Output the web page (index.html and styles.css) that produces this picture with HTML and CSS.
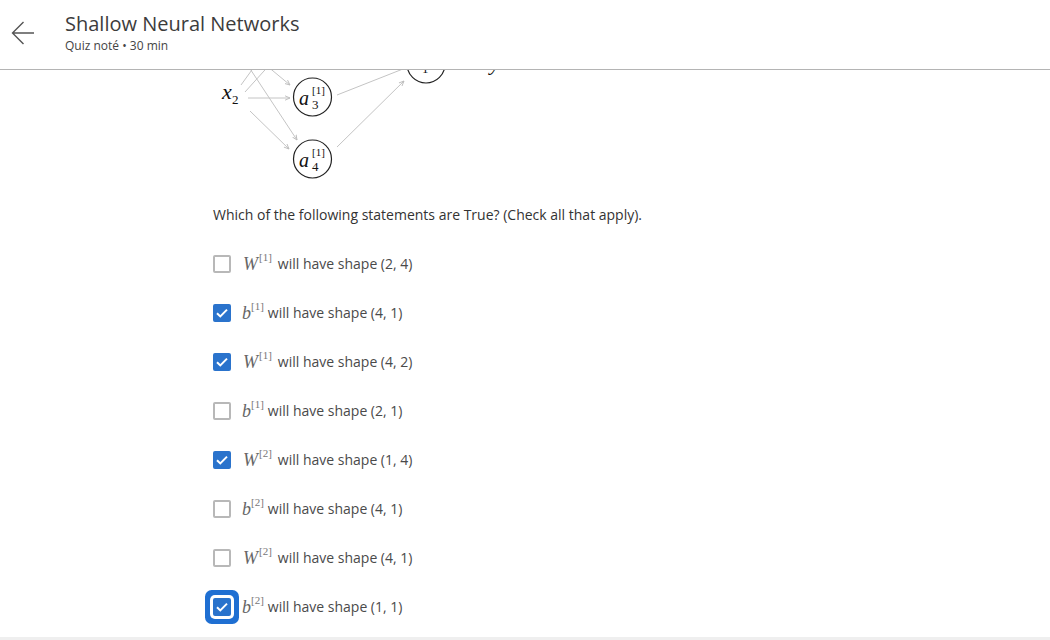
FILE: index.html
```html
<!DOCTYPE html>
<html>
<head>
<meta charset="utf-8">
<link rel="stylesheet" href="styles.css">
</head>
<body>
<header class="header">
  <div class="back">
    <svg width="26" height="26" viewBox="0 0 26 26"><path d="M23 12H1.5M12.5 1L1.5 12L12.5 23" fill="none" stroke="#555" stroke-width="1.4"/></svg>
  </div>
  <div class="titles">
    <div class="title">Shallow Neural Networks</div>
    <div class="subtitle">Quiz noté • 30 min</div>
  </div>
</header>
<main class="content">
  <svg class="diagram" width="320" height="112" viewBox="213 70 320 112">
    <defs>
      <marker id="ah" markerWidth="6" markerHeight="6" refX="5" refY="3" orient="auto" markerUnits="userSpaceOnUse">
        <path d="M0,0.8 L5,3 L0,5.2" fill="none" stroke="#bbb" stroke-width="0.9"/>
      </marker>
    </defs>
    <g stroke="#c4c4c4" stroke-width="1" fill="none">
      <line x1="241" y1="85" x2="262" y2="56"/>
      <line x1="245" y1="92" x2="283" y2="50"/>
      <line x1="235" y1="46" x2="297" y2="140" marker-end="url(#ah)"/>
      <line x1="255" y1="56" x2="290" y2="85" marker-end="url(#ah)"/>
      <line x1="248" y1="98" x2="290" y2="98" marker-end="url(#ah)"/>
      <line x1="250" y1="111" x2="289" y2="149" marker-end="url(#ah)"/>
      <line x1="337" y1="95" x2="408" y2="67"/>
      <line x1="337" y1="147" x2="404" y2="81" marker-end="url(#ah)"/>
    </g>
    <g stroke="#222" stroke-width="1.2" fill="none">
      <circle cx="312.5" cy="97" r="19"/>
      <circle cx="312.5" cy="159" r="19"/>
      <circle cx="426" cy="64" r="19"/>
    </g>
    <g class="mt">
      <text x="222" y="99" class="mv big">x</text>
      <text x="232" y="104" class="mn sub">2</text>
      <text x="299" y="105" class="mv">a</text>
      <text x="312" y="94" class="mn sup">[1]</text>
      <text x="312" y="109" class="mn sub">3</text>
      <text x="299" y="167" class="mv">a</text>
      <text x="312" y="156" class="mn sup">[1]</text>
      <text x="312" y="171" class="mn sub">4</text>
      <text x="413" y="62" class="mv">a</text>
      <text x="422" y="73" class="mn sub">1</text>
      <text x="490" y="70" class="mv big">y</text>
    </g>
  </svg>

  <p class="question">Which of the following statements are True? (Check all that apply).</p>

  <ul class="options">
    <li class="option"><span class="box"></span><span class="math"><i class="var w">W</i><span class="ix">[1]</span></span><span class="label">will have shape (2, 4)</span></li>
    <li class="option"><span class="box checked"><svg viewBox="0 0 18 18"><path d="M4 9.2l3.3 3.2L14 5.6" fill="none" stroke="#fff" stroke-width="2"/></svg></span><span class="math mb"><i class="var b">b</i><span class="ix">[1]</span></span><span class="label">will have shape (4, 1)</span></li>
    <li class="option"><span class="box checked"><svg viewBox="0 0 18 18"><path d="M4 9.2l3.3 3.2L14 5.6" fill="none" stroke="#fff" stroke-width="2"/></svg></span><span class="math"><i class="var w">W</i><span class="ix">[1]</span></span><span class="label">will have shape (4, 2)</span></li>
    <li class="option"><span class="box"></span><span class="math mb"><i class="var b">b</i><span class="ix">[1]</span></span><span class="label">will have shape (2, 1)</span></li>
    <li class="option"><span class="box checked"><svg viewBox="0 0 18 18"><path d="M4 9.2l3.3 3.2L14 5.6" fill="none" stroke="#fff" stroke-width="2"/></svg></span><span class="math"><i class="var w">W</i><span class="ix">[2]</span></span><span class="label">will have shape (1, 4)</span></li>
    <li class="option"><span class="box"></span><span class="math mb"><i class="var b">b</i><span class="ix">[2]</span></span><span class="label">will have shape (4, 1)</span></li>
    <li class="option"><span class="box"></span><span class="math"><i class="var w">W</i><span class="ix">[2]</span></span><span class="label">will have shape (4, 1)</span></li>
    <li class="option"><span class="box checked focused"><svg viewBox="0 0 18 18"><path d="M4 9.2l3.3 3.2L14 5.6" fill="none" stroke="#fff" stroke-width="2"/></svg></span><span class="math mb"><i class="var b">b</i><span class="ix">[2]</span></span><span class="label">will have shape (1, 1)</span></li>
  </ul>
</main>
<div class="footer-strip"></div>
</body>
</html>
```

FILE: styles.css
```css
* { box-sizing: border-box; }
html, body { margin: 0; padding: 0; }
body {
  width: 1050px;
  height: 640px;
  overflow: hidden;
  background: #fff;
  font-family: "Open Sans", "Liberation Sans", sans-serif;
  color: #333;
  display: flex;
  flex-direction: column;
}
.header {
  height: 70px;
  flex: 0 0 70px;
  border-bottom: 1px solid #b4b4b4;
  display: flex;
  align-items: flex-start;
}
.back {
  width: 65px;
  padding: 21px 0 0 11px;
}
.back svg { display: block; }
.titles {
  padding-top: 10px;
  display: flex;
  flex-direction: column;
  gap: 1px;
}
.title {
  font-size: 20px;
  line-height: 27px;
  color: #3c3c3c;
}
.subtitle {
  font-size: 12px;
  line-height: 15px;
  color: #444;
}
.content {
  flex: 1;
  padding-left: 213px;
  overflow: hidden;
}
.diagram { display: block; }
.mt text { fill: #111; font-family: "Liberation Serif", serif; }
.mv { font-style: italic; font-size: 20px; }
.mv.big { font-size: 22px; }
.mn { font-size: 11px; }
.mn.sub { font-size: 13px; }
.question {
  margin: 23px 0 0;
  font-size: 14px;
  line-height: 20px;
  color: #333;
}
.options {
  list-style: none;
  margin: 14px 0 0;
  padding: 0;
  display: flex;
  flex-direction: column;
}
.option {
  height: 49px;
  display: flex;
  align-items: center;
  font-size: 14px;
  color: #4a4a4a;
}
.box {
  width: 18px;
  height: 18px;
  flex: 0 0 18px;
  border: 2px solid #b8b8b8;
  border-radius: 2px;
  background: #fff;
  margin-right: 11px;
  display: flex;
}
.box svg { width: 18px; height: 18px; margin: -2px; display: block; }
.box.checked {
  background: #2a73cc;
  border-color: #2a73cc;
}
.box.focused {
  box-shadow: 0 0 0 3px #fff, 0 0 0 8px #1f6fd2;
}
.math {
  display: inline-flex;
  align-items: flex-start;
  margin-right: 6px;
  color: #666;
}
.math.mb { margin-right: 4px; }
.var {
  font-family: "Liberation Serif", serif;
  font-style: italic;
  font-size: 18px;
  line-height: 20px;
}
.var.w { margin-left: 1px; }
.ix {
  font-family: "Liberation Serif", serif;
  font-size: 11px;
  line-height: 11px;
  margin-left: 1px;
  margin-top: -2px;
  color: #777;
}
.mb .ix { margin-left: 0; }
.label { line-height: 20px; }
.footer-strip {
  flex: 0 0 3px;
  background: #efefef;
}
```
